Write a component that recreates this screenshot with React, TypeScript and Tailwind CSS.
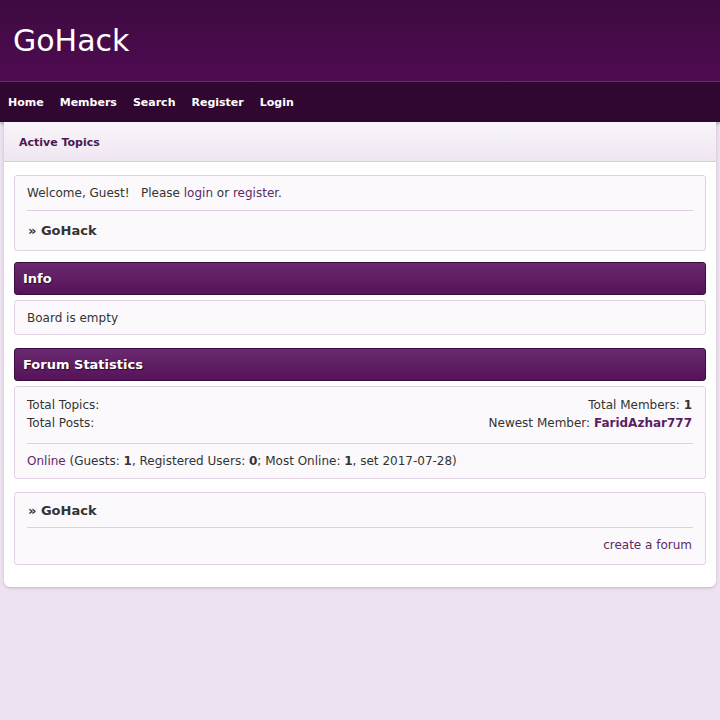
export default function App() {
  const font = { fontFamily: '"DejaVu Sans", Verdana, sans-serif' };
  return (
    <div className="min-h-[720px] bg-[#ede2ef] text-[12px] text-[#333]" style={font}>
      <header className="h-[82px] bg-gradient-to-b from-[#3e0a40] to-[#4f0b52] border-b border-[#6a2d6c] flex items-center px-[13px]">
        <h1 className="text-[30px] text-white leading-none pt-[1px]">GoHack</h1>
      </header>
      <nav className="h-[40px] bg-[#300731] flex items-center px-[8px] gap-[16px] pt-[2px] shadow-[0_2px_3px_rgba(0,0,0,0.25)]">
        {['Home', 'Members', 'Search', 'Register', 'Login'].map((item) => (
          <a key={item} className="text-[11px] font-bold text-white">{item}</a>
        ))}
      </nav>
      <main className="mx-[4px] bg-white rounded-b-[6px] shadow-[0_1px_3px_rgba(80,40,90,0.25)] pb-[22px]">
        <div className="h-[40px] bg-gradient-to-b from-[#f9f5f9] to-[#efe6f2] border-b border-[#dccbe0] flex items-center px-[15px] pt-[3px]">
          <span className="text-[11px] font-bold text-[#4a1a50]">Active Topics</span>
        </div>

        <div className="px-[10px] pt-[13px] flex flex-col">
          <div className="border border-[#e2d0e5] rounded-[3px] bg-[#fcf9fc] px-[12px]">
            <div className="h-[35px] flex items-center border-b border-[#dfcde2]">
              <span className="whitespace-pre">Welcome, Guest!   Please <a className="text-[#5b2a66]">login</a> or <a className="text-[#5b2a66]">register</a>.</span>
            </div>
            <div className="h-[39px] flex items-center pl-[1px]">
              <span className="text-[13px] font-bold text-[#333]">» GoHack</span>
            </div>
          </div>

          <div className="mt-[11px] h-[33px] rounded-[3px] border border-[#3c0b40] bg-gradient-to-b from-[#6a2a6f] to-[#56125a] flex items-center px-[8px]">
            <span className="text-[13px] font-bold text-white [text-shadow:1px_1px_1px_rgba(0,0,0,0.6)]">Info</span>
          </div>
          <div className="mt-[5px] h-[35px] border border-[#e2d0e5] rounded-[3px] bg-[#fcf9fc] px-[12px] flex items-center">
            Board is empty
          </div>

          <div className="mt-[13px] h-[33px] rounded-[3px] border border-[#3c0b40] bg-gradient-to-b from-[#6a2a6f] to-[#56125a] flex items-center px-[8px]">
            <span className="text-[13px] font-bold text-white [text-shadow:1px_1px_1px_rgba(0,0,0,0.6)]">Forum Statistics</span>
          </div>
          <div className="mt-[5px] border border-[#e2d0e5] rounded-[3px] bg-[#fcf9fc] px-[12px]">
            <div className="flex justify-between pt-[9px] pb-[11px] border-b border-[#dfcde2] leading-[18px]">
              <div className="flex flex-col">
                <span>Total Topics:</span>
                <span>Total Posts:</span>
              </div>
              <div className="flex flex-col items-end pr-[1px]">
                <span>Total Members: <b>1</b></span>
                <span>Newest Member: <b className="text-[#5a1f62]">FaridAzhar777</b></span>
              </div>
            </div>
            <div className="h-[34px] flex items-center pb-[1px]">
              <span><a className="text-[#5b2a66]">Online</a> (Guests: <b>1</b>, Registered Users: <b>0</b>; Most Online: <b>1</b>, set 2017-07-28)</span>
            </div>
          </div>

          <div className="mt-[13px] border border-[#e2d0e5] rounded-[3px] bg-[#fcf9fc] px-[12px]">
            <div className="h-[35px] flex items-center border-b border-[#dfcde2] pl-[1px] pt-[2px]">
              <span className="text-[13px] font-bold text-[#333]">» GoHack</span>
            </div>
            <div className="h-[36px] flex items-center justify-end pr-[1px] pb-[3px]">
              <a className="text-[#5b2a66]">create a forum</a>
            </div>
          </div>
        </div>
      </main>
    </div>
  );
}
